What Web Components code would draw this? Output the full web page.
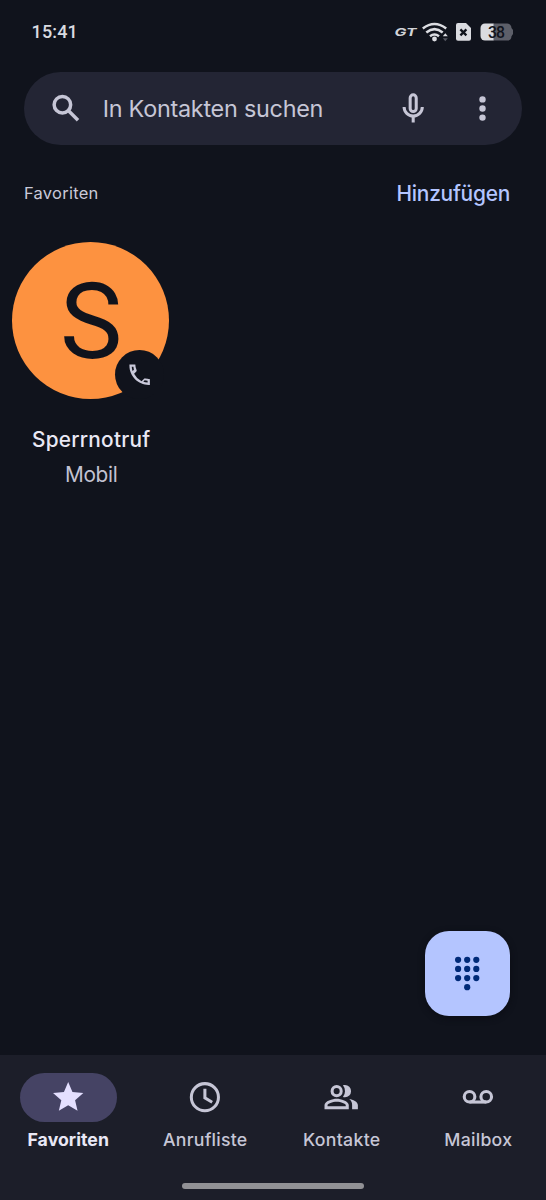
<!DOCTYPE html>
<html lang="de"><head><meta charset="utf-8"><title>Telefon</title>
<style>html,body{margin:0;background:#10131c}</style></head><body>
<phone-app></phone-app>
<script>
const define = (name, html, setup) => customElements.define(name, class extends HTMLElement {
  connectedCallback() {
    if (this.shadowRoot) return;
    const t = document.createElement('template');
    t.innerHTML = html;
    this.attachShadow({mode: 'open'}).append(t.content.cloneNode(true));
    if (setup) setup(this, this.shadowRoot);
  }
});

const icons = {
  search: '<g fill="none" stroke="currentColor" stroke-width="2.300"><circle cx="9.500" cy="9.700" r="5.450"/><path d="M13.700 13.900l6.100 6.100"/></g>',
  mic: '<g fill="none" stroke="currentColor" stroke-width="2"><rect x="10" y="3.200" width="4" height="11" rx="2"/><path d="M6 11.200a6 6 0 0 0 12 0M12 17.200v4.300"/></g>',
  more: '<circle cx="12.200" cy="6.200" r="2.100"/><circle cx="12.200" cy="12.200" r="2.100"/><circle cx="12.200" cy="18.200" r="2.100"/>',
  call: '<path d="M6.540 5c.06.89.21 1.760.45 2.590l-1.200 1.200c-.41-1.200-.67-2.470-.76-3.790h1.510m9.860 12.020c.85.24 1.720.39 2.600.45v1.490c-1.320-.09-2.590-.35-3.800-.75l1.200-1.190M8.200 3H3v1c0 9.390 7.610 17 17 17h1v-4.900c0-.2-4.200-.77-4.590-.67-.26 0-.51.1-.71.29l-2 2a15.150 15.150 0 0 1-6.590-6.590l2-2c.28-.28.36-.67.25-1.020A11.360 11.360 0 0 1 8.200 3z"/>',
  star: '<path d="M12 17.270 18.180 21l-1.640-7.030L22 9.240l-7.190-.61L12 2 9.190 8.630 2 9.240l5.460 4.730L5.820 21z"/>',
  clock: '<g fill="none" stroke="currentColor" stroke-width="2"><circle cx="11.800" cy="12" r="8.950"/><path d="M11.800 6.500v5.900l4.800 2.900"/></g>',
  people: '<path fill-rule="evenodd" d="M1 20v-2.800c0-2.700 5.330-4.200 8-4.200s8 1.500 8 4.200V20zm2-2h12v-.8c0-.8-3.200-2.200-6-2.200s-6 1.400-6 2.200zM9 12a4 4 0 1 1 0-8 4 4 0 0 1 0 8zm0-2a2 2 0 1 0 0-4 2 2 0 0 0 0 4z"/><path d="M14.500 12a4 4 0 0 0 0-8c-.5 0-.9.06-1.350.2a6 6 0 0 1 0 7.600c.45.13.85.2 1.350.2zM17.300 13.130A5 5 0 0 1 19.200 17.200V20H23v-2.800c0-2.330-3.300-3.700-5.700-4.070z"/>',
  mail: '<g fill="none" stroke="currentColor" stroke-width="2.050"><circle cx="6.300" cy="11.700" r="3.500"/><circle cx="17.300" cy="11.700" r="3.500"/><path d="M6.300 15.200h11"/></g>',
  dial: [[6,3],[12,3],[18,3],[6,9],[12,9],[18,9],[6,15],[12,15],[18,15],[12,21]].map(([x,y]) => `<circle cx="${x}" cy="${y + .2}" r="2.050"/>`).join('')
};

define('ui-icon', `<style>:host{display:block;flex:none;width:var(--size,36.400px);height:var(--size,36.400px)}svg{display:block;width:100%;height:100%;fill:currentColor}</style><svg viewBox="0 0 24 24"></svg>`,
  (el, root) => root.querySelector('svg').innerHTML = icons[el.getAttribute('name')]);

// Text label whose tracking is tuned so that it has the given advance width.
define('ui-label', `<style>:host{display:block;flex:none;white-space:nowrap}span{display:inline-block}</style><span><slot></slot></span>`,
  (el, root) => {
    const s = root.querySelector('span'), w = parseFloat(el.getAttribute('fit'));
    const n = el.textContent.length;
    s.style.letterSpacing = (w - s.getBoundingClientRect().width) / n + 'px';
  });

define('status-bar', `<style>
:host{display:flex;height:64px;box-sizing:border-box;padding:0 32px 0 31.500px;align-items:center;color:#dadbe0}
ui-label{font:500 18px/24px Roboto,sans-serif}
.icons{margin-left:auto;display:flex;align-items:center}
svg{display:block}
</style><ui-label fit="46.500">15:41</ui-label>
<div class="icons">
<svg width="120" height="22" viewBox="0 0 120 22">
<text x="0.500" y="15.300" font-family="Inter,sans-serif" font-size="10.500" font-weight="700" font-style="italic" fill="#d2d3d8" textLength="22" lengthAdjust="spacingAndGlyphs">GT</text>
<g fill="none" stroke="#dcdde2" stroke-width="2.500"><path d="M28.800 7.500q11.700-9 23.400 0"/><path d="M32.300 11.500q8.200-6.700 16.400 0"/><path d="M36 15.300q4.500-3.500 9 0"/></g>
<circle cx="40.500" cy="18" r="2.400" fill="#dcdde2"/>
<path d="M48.800 15.200l2.500-3 2.500 3z" fill="#dcdde2"/><path d="M48.800 17.200l2.500 3 2.500-3z" fill="#555761"/>
<path d="M64 2h8l5 5v10.700a2 2 0 0 1-2 2H64a2 2 0 0 1-2-2V4a2 2 0 0 1 2-2z" fill="#dadbe0"/>
<path d="M66.400 8.400l6 6m0-6l-6 6" stroke="#10131c" stroke-width="2.300"/>
<path d="M99 2.500h14a4.500 4.500 0 0 1 4.500 4.500l1.500 2v4l-1.500 2.200a4.500 4.500 0 0 1-4.500 4.300H99z" fill="#5d5f69"/>
<path d="M91 2.500h8.500v17H91a4.500 4.500 0 0 1-4.500-4.500V7A4.500 4.500 0 0 1 91 2.500z" fill="#dadbe0"/>
<text x="94" y="16.600" font-family="Roboto,sans-serif" font-size="15.800" font-weight="500" fill="#10131c" textLength="17">38</text>
</svg></div>`);

define('search-bar', `<style>
:host{display:flex;align-items:center;box-sizing:border-box;height:72.500px;margin:8.300px 24px 0;padding:0 21.300px 0 24px;border-radius:37px;background:#232534;color:#c6c6d6}
ui-label{font:400 23.400px/34px Inter,sans-serif;margin-left:18.300px}
.mic{margin-left:auto;margin-right:33.200px}
</style><ui-icon name="search"></ui-icon><ui-label fit="220.500">In Kontakten suchen</ui-label><ui-icon class="mic" name="mic"></ui-icon><ui-icon name="more"></ui-icon>`);

define('section-header', `<style>
:host{display:flex;justify-content:space-between;align-items:center;height:40px;margin:28.400px 36px 0 24px;color:#c9c9d8;font:400 16.500px/24px Inter,sans-serif}
.add{font:500 20.900px/30px Inter,sans-serif;color:#b4c5ff;padding-top:1.500px}
</style><ui-label fit="74.500">Favoriten</ui-label><ui-label class="add" fit="113.500">Hinzufügen</ui-label>`);

define('favorite-contact', `<style>
:host{display:flex;flex-direction:column;align-items:center;width:158px;margin:28.600px 0 0 11.700px}
.avatar{position:relative;width:157.600px;height:157.600px;border-radius:50%;background:#fd9240;color:#10131c;display:flex;align-items:center;justify-content:center;font:400 105px/120px Roboto,sans-serif}
.letter{padding:4px 0 0 1px}
.badge{position:absolute;right:5px;bottom:0;width:49px;height:49px;border-radius:50%;background:#10131c;color:#c9c9da;display:flex;align-items:center;justify-content:center;--size:27.300px}
.name{font:500 20.800px/34px Inter,sans-serif;color:#e9e8f4;margin:23.200px 0 0 1px}
.type{font:400 20.800px/34px Inter,sans-serif;color:#c2c2d2;margin:1px 0 0 1px}
</style><div class="avatar"><span class="letter">S</span><div class="badge"><ui-icon name="call"></ui-icon></div></div><ui-label class="name" fit="118.500">Sperrnotruf</ui-label><ui-label class="type" fit="52.500">Mobil</ui-label>`);

define('dial-button', `<style>
:host{display:flex;align-items:center;justify-content:center;width:84.800px;height:84.800px;margin:auto 36px 39.200px auto;border-radius:24px;background:#b4c5ff;color:#002a78;box-shadow:0 2px 6px #0b0d14}
</style><ui-icon name="dial"></ui-icon>`);

define('nav-item', `<style>
:host{flex:1;display:flex;flex-direction:column;align-items:center;color:#c6c6d6}
.pill{width:97px;height:48.500px;border-radius:25px;display:flex;align-items:center;justify-content:center}
ui-label{font:500 17.700px/26px Inter,sans-serif;margin:5.500px 0 0 1px}
:host([active]) .pill{background:#454364;color:#e4dfff}
:host([active]) ui-label{font-weight:700;color:#e9e8f6;margin-left:0}
</style><div class="pill"><ui-icon></ui-icon></div><ui-label></ui-label>`, (el, root) => {
  const ic = document.createElement('ui-icon'), lb = document.createElement('ui-label');
  ic.setAttribute('name', el.getAttribute('icon'));
  lb.setAttribute('fit', el.getAttribute('fit'));
  lb.textContent = el.getAttribute('label');
  root.querySelector('ui-icon').replaceWith(ic);
  root.querySelector('ui-label').replaceWith(lb);
});

define('bottom-nav', `<style>
:host{display:block;height:145.200px;background:#1c1e29}
nav{display:flex;padding-top:18.200px;height:110px;box-sizing:border-box}
.handle{width:181.500px;height:6px;border-radius:3px;background:#919195;margin:18px auto 0}
</style><nav>
<nav-item active icon="star" label="Favoriten" fit="81.500"></nav-item>
<nav-item icon="clock" label="Anrufliste" fit="84.500"></nav-item>
<nav-item icon="people" label="Kontakte" fit="77.500"></nav-item>
<nav-item icon="mail" label="Mailbox" fit="68"></nav-item>
</nav><div class="handle"></div>`);

define('phone-app', `<style>:host{display:flex;flex-direction:column;width:546px;height:1200px;overflow:hidden;background:#10131c}
:host>*{flex:none}</style>
<status-bar></status-bar><search-bar></search-bar><section-header></section-header><favorite-contact></favorite-contact><dial-button></dial-button><bottom-nav></bottom-nav>`);
</script></body></html>
